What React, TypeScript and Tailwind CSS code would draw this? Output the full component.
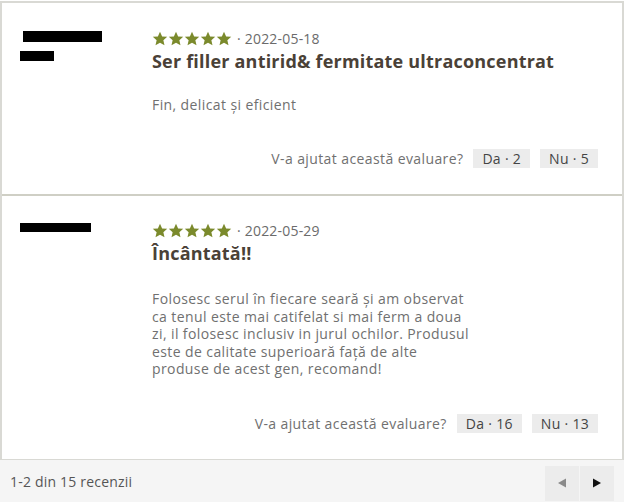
import React from "react";

const Star = () => (
  <svg width="16" height="16" viewBox="0 0 24 24" className="shrink-0">
    <path
      d="M12 1l3.2 7.1 7.6.7-5.75 5.05 1.7 7.6L12 17.5l-6.75 3.95 1.7-7.6L1.2 8.8l7.6-.7z"
      fill="#7b8a2c"
    />
  </svg>
);

type Review = {
  nameBars: { w: number; h: number; ml: number; mt: number }[];
  date: string;
  title: string;
  body: string;
  yes: number;
  no: number;
};

const reviews: Review[] = [
  {
    nameBars: [
      { w: 79, h: 11, ml: 3, mt: 0 },
      { w: 34, h: 10, ml: 0, mt: 9 },
    ],
    date: "2022-05-18",
    title: "Ser filler antirid& fermitate ultraconcentrat",
    body: "Fin, delicat și eficient",
    yes: 2,
    no: 5,
  },
  {
    nameBars: [{ w: 71, h: 9, ml: 0, mt: 0 }],
    date: "2022-05-29",
    title: "Încântată!!",
    body:
      "Folosesc serul în fiecare seară și am observat ca tenul este mai catifelat si mai ferm a doua zi, il folosesc inclusiv in jurul ochilor. Produsul este de calitate superioară față de alte produse de acest gen, recomand!",
    yes: 16,
    no: 13,
  },
];

function Card({ r, first }: { r: Review; first: boolean }) {
  return (
    <div
      className={`flex bg-white pl-[18px] pr-[24px] ${
        first ? "pt-[27px] pb-[25px] border-b-2 border-[#cfcfc5]" : "pt-[26px] pb-[25px]"
      }`}
    >
      <div className="w-[132px] shrink-0 pt-[1px]">
        {r.nameBars.map((b, i) => (
          <div
            key={i}
            className="bg-black"
            style={{ width: b.w, height: b.h, marginLeft: b.ml, marginTop: b.mt }}
          />
        ))}
      </div>
      <div className="flex-1 flex flex-col">
        <div className="flex items-center h-[17px]">
          <div className="flex">
            <Star />
            <Star />
            <Star />
            <Star />
            <Star />
          </div>
          <span className="ml-[5px] text-[14px] tracking-[0.2px] text-[#6b6b6b]">
            · {r.date}
          </span>
        </div>
        <div className="mt-[3px] text-[18px] leading-[22px] tracking-[0.2px] font-bold text-[#4a4137]">
          {r.title}
        </div>
        <div
          className={`text-[14px] leading-[17.5px] tracking-[0.4px] text-[#707070] max-w-[322px] ${
            first ? "mt-[24px] min-h-[34px]" : "mt-[26px]"
          }`}
        >
          {r.body}
        </div>
        <div className={`flex items-center justify-end ${first ? "mt-[18px]" : "mt-[35px]"}`}>
          <span className="text-[14px] tracking-[0.4px] text-[#707070] mr-[10px]">
            V-a ajutat această evaluare?
          </span>
          <button className="h-[19px] px-[9px] bg-[#ececec] text-[14px] tracking-[0.3px] text-[#444] leading-[19px]">
            Da · {r.yes}
          </button>
          <button className="ml-[10px] h-[19px] px-[9px] bg-[#ececec] text-[14px] tracking-[0.3px] text-[#444] leading-[19px]">
            Nu · {r.no}
          </button>
        </div>
      </div>
    </div>
  );
}

export default function App() {
  return (
    <div
      className="w-[626px] h-[502px] bg-white overflow-hidden"
      style={{ fontFamily: '"Open Sans", "Noto Sans", sans-serif' }}
    >
      <div className="mt-[1px] border-2 border-[#d9d9d4] border-b w-[624px]">
        {reviews.map((r, i) => (
          <Card key={i} r={r} first={i === 0} />
        ))}
      </div>
      <div className="w-[624px] h-[43px] bg-[#f5f5f5] flex items-center justify-between pl-[10px] pr-[10px]">
        <span className="text-[14px] tracking-[0.2px] text-[#555]">1-2 din 15 recenzii</span>
        <div className="flex gap-[1px] self-end mb-[2px]">
          <div className="w-[34px] h-[35px] bg-[#ececec] flex items-center justify-center">
            <svg width="12" height="12" viewBox="0 0 12 12">
              <path d="M10 1.5L2 6l8 4.5z" fill="#8a8a8a" />
            </svg>
          </div>
          <div className="w-[34px] h-[35px] bg-[#ececec] flex items-center justify-center">
            <svg width="12" height="12" viewBox="0 0 12 12">
              <path d="M2 1.5L10 6l-8 4.5z" fill="#111" />
            </svg>
          </div>
        </div>
      </div>
    </div>
  );
}
